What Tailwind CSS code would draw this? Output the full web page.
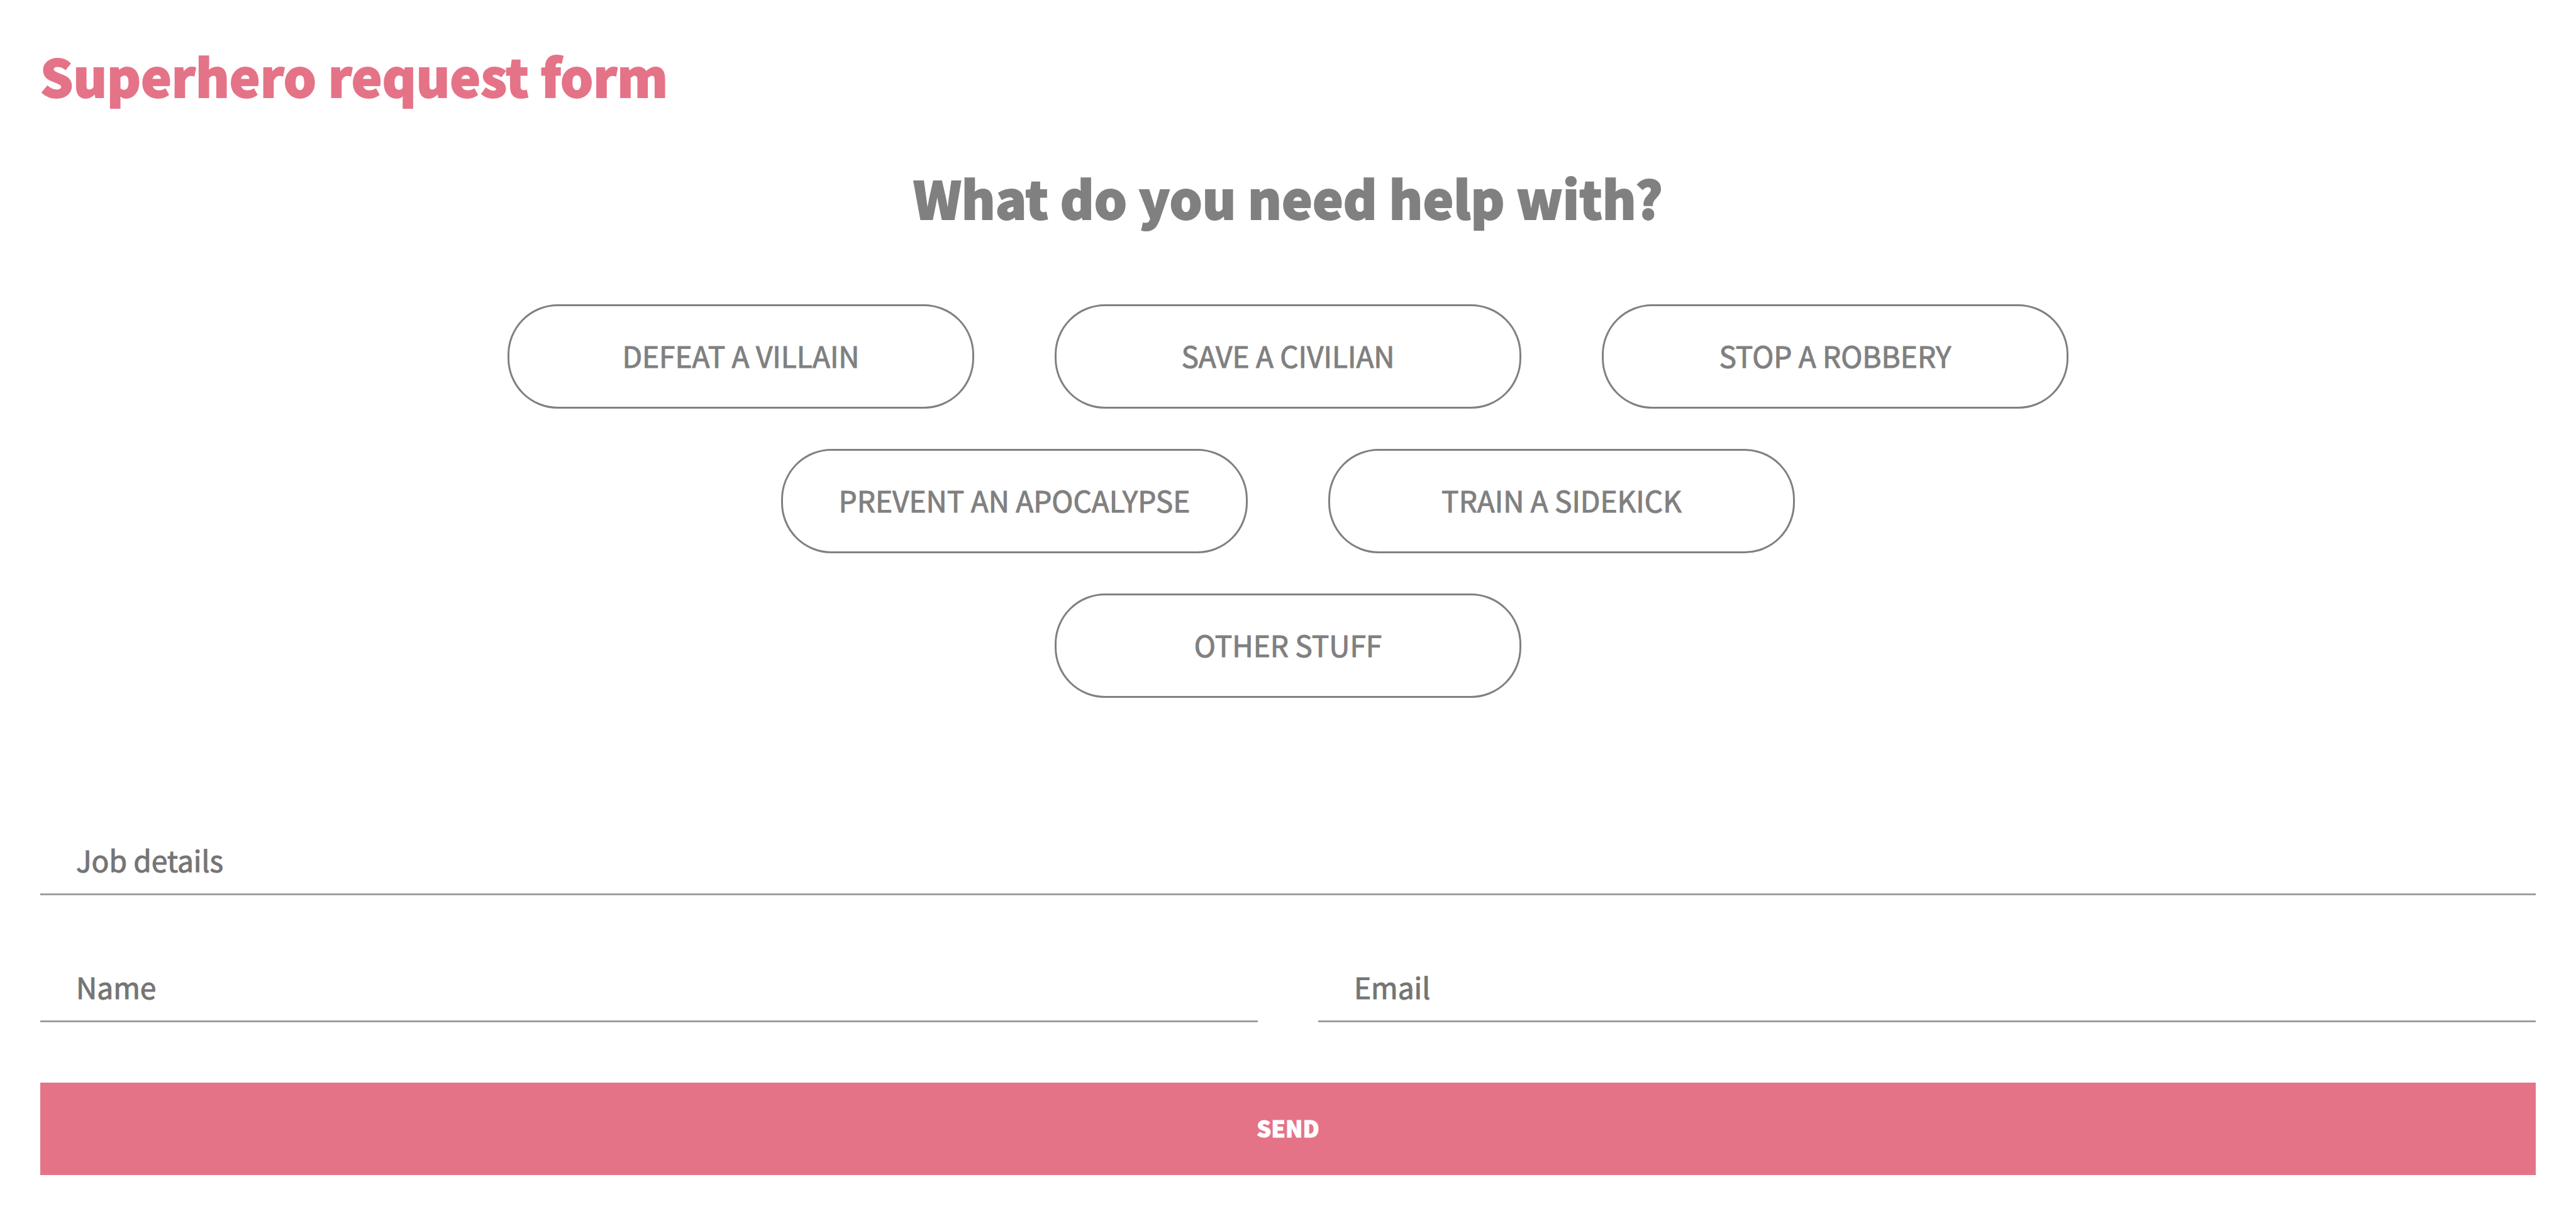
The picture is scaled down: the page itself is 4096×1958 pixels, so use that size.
<!DOCTYPE html>
<html lang="en">
<head>
<meta charset="utf-8">
<title>Superhero request form</title>
<script src="https://cdn.jsdelivr.net/npm/@tailwindcss/browser@4"></script>
</head>
<body class="bg-white font-['Noto_Sans_CJK_SC',sans-serif] text-[#808080] [-webkit-text-stroke:1px]">
<form class="px-16 pt-16 pb-[88px]">
  <h1 class="text-[82px] leading-[112px] font-black text-[#e57387] [-webkit-text-stroke:2px]">Superhero request form</h1>
  <fieldset class="mt-[82px]">
    <legend class="w-full text-center text-[82px] leading-[112px] font-black [-webkit-text-stroke:2px]">What do you need help with?</legend>
    <div class="mt-[114px] flex flex-col gap-16">
      <div class="flex justify-center gap-32">
        <button type="button" class="h-[166px] w-[742px] rounded-[80px] border-3 border-[#808080] pb-[3px] text-[46px]">DEFEAT A VILLAIN</button>
        <button type="button" class="h-[166px] w-[742px] rounded-[80px] border-3 border-[#808080] pb-[3px] text-[46px]">SAVE A CIVILIAN</button>
        <button type="button" class="h-[166px] w-[742px] rounded-[80px] border-3 border-[#808080] pb-[3px] text-[46px]">STOP A ROBBERY</button>
      </div>
      <div class="flex justify-center gap-32">
        <button type="button" class="h-[166px] w-[742px] rounded-[80px] border-3 border-[#808080] pb-[3px] text-[46px]">PREVENT AN APOCALYPSE</button>
        <button type="button" class="h-[166px] w-[742px] rounded-[80px] border-3 border-[#808080] pb-[3px] text-[46px]">TRAIN A SIDEKICK</button>
      </div>
      <div class="flex justify-center gap-32">
        <button type="button" class="h-[166px] w-[742px] rounded-[80px] border-3 border-[#808080] pb-[3px] text-[46px]">OTHER STUFF</button>
      </div>
    </div>
  </fieldset>
  <div class="mt-[208px] grid grid-cols-2 gap-24">
    <input aria-label="Job details" placeholder="Job details" class="col-span-2 h-[106px] border-b-3 border-[#9e9e9e] px-[57px] pb-[5px] text-[46px] placeholder:text-[#757575]">
    <input aria-label="Name" placeholder="Name" class="h-[106px] border-b-3 border-[#9e9e9e] px-[57px] pb-[5px] text-[46px] placeholder:text-[#757575]">
    <input type="email" aria-label="Email" placeholder="Email" class="h-[106px] border-b-3 border-[#9e9e9e] px-[57px] pb-[5px] text-[46px] placeholder:text-[#757575]">
    <button class="col-span-2 h-[147px] bg-[#e57387] pb-[5px] text-[36px] font-black text-white">SEND</button>
  </div>
</form>
</body>
</html>
